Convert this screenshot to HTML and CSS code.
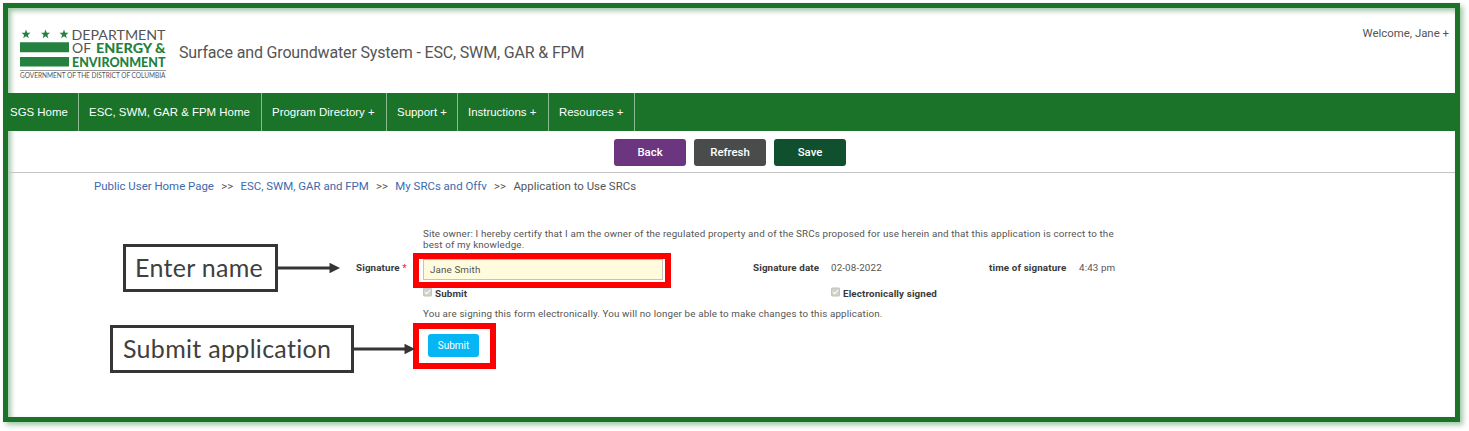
FILE: index.html
```html
<!DOCTYPE html>
<html lang="en">
<head>
<meta charset="utf-8">
<title>Surface and Groundwater System</title>
<link rel="stylesheet" href="styles.css">
</head>
<body>
<div class="frame">
  <header class="header">
    <svg class="logo" width="148" height="54" viewBox="0 0 148 54" role="img" aria-label="Department of Energy and Environment">
      <g fill="#24813f">
        <path id="star" d="M6 .5 7.2 3.8H10.5L7.9 5.9 8.8 9.2 6 7.2 3.2 9.2 4.1 5.9 1.5 3.8H4.8Z"/>
        <use href="#star" x="19.5"/>
        <use href="#star" x="38"/>
        <path d="M0 13.2H49V23.2H0ZM0 28H49V37.5H0Z"/>
      </g>
      <g class="logo-words">
        <text x="51.5" y="11.3" textLength="94" lengthAdjust="spacingAndGlyphs">DEPARTMENT</text>
        <text x="52" y="24.2" textLength="19" lengthAdjust="spacingAndGlyphs">OF</text>
        <text class="logo-bold" x="76" y="24.2" textLength="69.5" lengthAdjust="spacingAndGlyphs">ENERGY &amp;</text>
        <text class="logo-bold" x="52" y="37.5" textLength="93.5" lengthAdjust="spacingAndGlyphs">ENVIRONMENT</text>
      </g>
      <path d="M0 41.5H146" stroke="#9a9a9a" stroke-width="1"/>
      <text class="logo-small" x="0" y="49.3" textLength="145.5" lengthAdjust="spacingAndGlyphs">GOVERNMENT OF THE DISTRICT OF COLUMBIA</text>
    </svg>
    <h1 class="title">Surface and Groundwater System - ESC, SWM, GAR &amp; FPM</h1>
    <span class="welcome">Welcome, Jane +</span>
  </header>
  <nav class="nav">
    <a class="nav-item nav-first">SGS Home</a>
    <a class="nav-item nav-esc">ESC, SWM, GAR &amp; FPM Home</a>
    <a class="nav-item nav-program">Program Directory +</a>
    <a class="nav-item nav-support">Support +</a>
    <a class="nav-item nav-instructions">Instructions +</a>
    <a class="nav-item nav-resources">Resources +</a>
  </nav>
  <div class="toolbar">
    <button class="tool back">Back</button>
    <button class="tool refresh">Refresh</button>
    <button class="tool save">Save</button>
  </div>
  <div class="crumbs">
    <a>Public User Home Page</a><span class="sep">&gt;&gt;</span><a>ESC, SWM, GAR and FPM</a><span class="sep">&gt;&gt;</span><a>My SRCs and Offv</a><span class="sep">&gt;&gt;</span><span>Application to Use SRCs</span>
  </div>
  <main class="form">
    <p class="certify">Site owner: I hereby certify that I am the owner of the regulated property and of the SRCs proposed for use herein and that this application is correct to the<br>best of my knowledge.</p>
    <div class="row signature">
      <label class="label">Signature <span class="required">*</span></label>
      <div class="field">Jane Smith</div>
      <b class="date-label">Signature date</b>
      <span class="date">02-08-2022</span>
      <b class="time-label">time of signature</b>
      <span>4:43 pm</span>
    </div>
    <div class="row checks">
      <div class="check">
        <svg class="box" viewBox="0 0 9 9"><rect x=".5" y=".5" width="8" height="8" rx="1" fill="#d0d0cc" stroke="#c5c5bd"/><path d="M2 4.5 3.8 6.3 7 2.5" fill="none" stroke="#fff" stroke-width="1.1"/></svg>
        <b>Submit</b>
      </div>
      <div class="check signed">
        <svg class="box" viewBox="0 0 9 9"><rect x=".5" y=".5" width="8" height="8" rx="1" fill="#d0d0cc" stroke="#c5c5bd"/><path d="M2 4.5 3.8 6.3 7 2.5" fill="none" stroke="#fff" stroke-width="1.1"/></svg>
        <b>Electronically signed</b>
      </div>
    </div>
    <p class="notice">You are signing this form electronically. You will no longer be able to make changes to this application.</p>
    <button class="submit">Submit</button>
  </main>
</div>
<div class="highlight highlight-name"></div>
<div class="highlight highlight-submit"></div>
<div class="callout callout-name">Enter name</div>
<div class="callout callout-submit">Submit application</div>
<svg class="arrow arrow-name" width="64" height="12" viewBox="0 0 64 12"><path d="M0 6H54" stroke="#363434" stroke-width="3"/><path d="M52.5 .7 63 6 52.5 11.3Z" fill="#363434"/></svg>
<svg class="arrow arrow-submit" width="64" height="12" viewBox="0 0 64 12"><path d="M0 6H54" stroke="#363434" stroke-width="3"/><path d="M52.5 .7 63 6 52.5 11.3Z" fill="#363434"/></svg>
</body>
</html>
```
FILE: styles.css
```css
* { box-sizing: border-box; }
body {
  margin: 0;
  padding: 3px;
  width: 1469px;
  height: 431px;
  overflow: hidden;
  background: #fff;
  color: #555;
  font-family: Roboto, sans-serif;
  font-size: 9.8px;
}
p, h1 { margin: 0; }
button { border: 0; padding: 0; color: #fff; font-family: inherit; }
b { color: #3a3a3a; font-weight: 700; }

.frame {
  width: 1457px;
  height: 419px;
  border: 5px solid #1a7328;
  box-shadow: 3px 3px 5px rgba(26, 115, 40, .4), inset 3px 3px 5px rgba(26, 115, 40, .4);
}
.header {
  display: flex;
  align-items: flex-start;
  height: 84.5px;
  padding: 21px 6px 0 12px;
}
.logo { flex: none; overflow: visible; }
.logo-words { font: 13.6px Lato, sans-serif; fill: #555; }
.logo-bold { font-weight: 900; fill: #24813f; }
.logo-small { font: 6.6px Lato, sans-serif; fill: #555; }
.title {
  margin: 14px 0 0 11px;
  font-size: 16px;
  line-height: 20px;
  font-weight: 400;
  letter-spacing: -.16px;
}
.welcome { margin: -3px 0 0 auto; font-size: 11.4px; line-height: 14px; }

.nav {
  display: flex;
  height: 38.5px;
  background: #1a7328;
}
.nav-item {
  padding-left: 10px;
  border-right: 1.5px solid #8cba93;
  color: #fff;
  font-family: "Liberation Sans", sans-serif;
  font-size: 11.45px;
  line-height: 38px;
  white-space: nowrap;
}
.nav-first { width: 71px; padding-left: 2px; }
.nav-esc { width: 183px; }
.nav-program { width: 125px; }
.nav-support { width: 71px; }
.nav-instructions { width: 91px; }
.nav-resources { width: 86px; }

.toolbar {
  display: flex;
  gap: 8px;
  height: 42px;
  padding: 8px 0 0 606px;
  border-bottom: 1.5px solid #c5c5c5;
}
.tool { width: 72px; height: 27px; padding-bottom: 1px; border-radius: 3px; font-size: 11.4px; font-weight: 500; }
.back { background: #6b357f; }
.refresh { background: #4a4c4c; }
.save { background: #10502f; }

.crumbs {
  display: flex;
  height: 26px;
  padding: 6px 0 0 86px;
  font-size: 11.45px;
  line-height: 14px;
}
.crumbs a { color: #3e69ad; }
.sep { margin: 0 7.3px; }

.form { padding-top: 29px; }
.certify { margin-left: 415px; line-height: 11.3px; letter-spacing: .152px; white-space: nowrap; }
.row { display: flex; }
.signature { height: 27px; margin-top: 8px; line-height: 18px; letter-spacing: .13px; }
.label { width: 415px; padding-left: 348px; color: #3a3a3a; font-weight: 700; }
.required { color: #f33; }
.field {
  width: 240px;
  height: 21px;
  padding: 0 6px;
  border: 1px solid #c4c4b8;
  background: #fffbdc;
  line-height: 19px;
}
.date-label { width: 78px; margin-left: 90px; white-space: nowrap; }
.date { width: 158px; }
.time-label { width: 90px; white-space: nowrap; }
.checks { padding: 1px 0 0 415px; line-height: 14px; letter-spacing: .13px; }
.check { display: flex; width: 408px; gap: 3px; }
.box { width: 9px; height: 10px; background: #fffbdc; }
.notice { margin: 6px 0 0 415px; line-height: 14px; letter-spacing: .152px; }
.submit {
  display: block;
  width: 51px;
  height: 23px;
  margin: 13px 0 0 420px;
  border-radius: 3px;
  background: #05b5f4;
  font-size: 10px;
}

/* Tutorial annotations over the form */
.highlight { position: absolute; border: 6px solid #f00; }
.highlight-name { left: 413px; top: 253px; width: 258px; height: 35px; }
.highlight-submit { left: 413px; top: 323px; width: 83px; height: 46px; }
.callout {
  position: absolute;
  height: 48px;
  border: 3px solid #363434;
  background: #fff;
  color: #404040;
  font-family: Lato, sans-serif;
  font-size: 25px;
  line-height: 40px;
  letter-spacing: .3px;
  white-space: nowrap;
}
.callout-name { left: 123px; top: 244px; width: 155px; padding-left: 9px; }
.callout-submit { left: 110px; top: 325px; width: 244px; padding-left: 10px; }
.arrow { position: absolute; }
.arrow-name { left: 277px; top: 262px; }
.arrow-submit { left: 352px; top: 343px; }
```
